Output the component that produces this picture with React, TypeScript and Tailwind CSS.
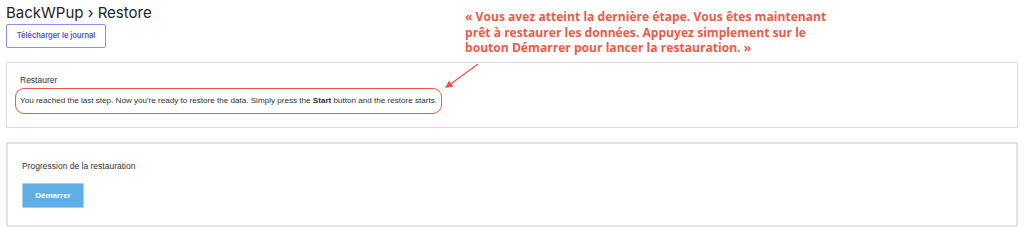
import React from "react";

const App = () => {
  return (
    <div className="relative min-h-screen bg-white px-[6px] pt-[3px] font-['Inter','Liberation_Sans',sans-serif] text-[#2c3338]">
      {/* Header */}
      <h1 className="text-[15px] leading-[20px] font-normal text-[#1d2327]">BackWPup › Restore</h1>
      <button
        type="button"
        className="mt-[1px] block h-[24px] w-[100px] rounded-[2px] border border-[#8c8cf5] bg-white text-[7.5px] font-semibold text-[#4f4fe0]"
      >
        Télécharger le journal
      </button>

      {/* Restaurer card */}
      <div className="mt-[14px] h-[66px] border border-[#dcdcde] bg-white px-[13px] pt-[11px] font-['Liberation_Sans',sans-serif]">
        <p className="text-[8.5px] leading-[12px]">Restaurer</p>
        <p className="-ml-[5px] mt-[2px] inline-block rounded-[9px] border-[1.5px] border-[#ea5a45] px-[4px] py-[6px] text-[8.1px] leading-[12px]">
          You reached the last step. Now you&apos;re ready to restore the data. Simply press the{" "}
          <strong className="font-bold">Start</strong> button and the restore starts.
        </p>
      </div>

      {/* Progression card */}
      <div className="mt-[14px] h-[85px] border-2 border-[#e3e3e5] bg-white px-[14px] pt-[16px] font-['Liberation_Sans',sans-serif]">
        <p className="text-[8.5px] leading-[12px]">Progression de la restauration</p>
        <button
          type="button"
          className="mt-[11px] block h-[25px] w-[62px] rounded-[1px] border border-[#9fd0f0] bg-[#5eaee8] text-[8px] font-bold text-white"
        >
          Démarrer
        </button>
      </div>

      {/* Annotation */}
      <p className="absolute left-[465px] top-[9px] whitespace-nowrap font-['Open_Sans',sans-serif] text-[12.1px] font-bold leading-[15.5px] text-[#f05a45]">
        « Vous avez atteint la dernière étape. Vous êtes maintenant
        <br />
        prêt à restaurer les données. Appuyez simplement sur le
        <br />
        bouton Démarrer pour lancer la restauration. »
      </p>
      <svg className="absolute left-[440px] top-[60px]" width="45" height="32" viewBox="0 0 45 32">
        <line x1="38" y1="4" x2="8" y2="26" stroke="#ea5a45" strokeWidth="1.3" />
        <path d="M5 28 L9 20.5 L13.5 26.5 Z" fill="#ea5a45" />
      </svg>
    </div>
  );
};

export default App;
